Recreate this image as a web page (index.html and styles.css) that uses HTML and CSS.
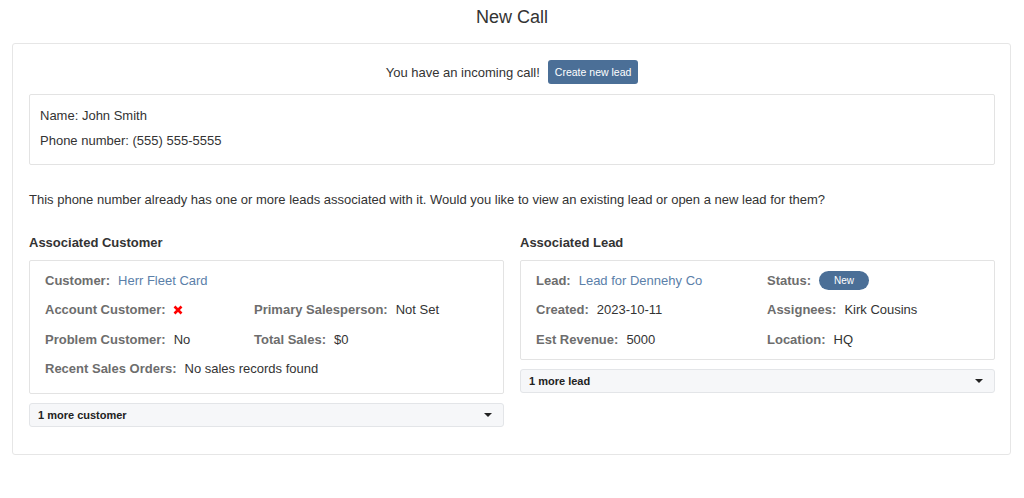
FILE: index.html
```html
<!DOCTYPE html>
<html lang="en">

<head>
    <meta charset="UTF-8">
    <meta name="viewport" content="width=device-width, initial-scale=1.0">
    <title>New Call</title>
    <link rel="stylesheet" href="styles.css">
</head>

<body>
    <h1 class="page-title">New Call</h1>
    <div class="call-card">
        <div class="incoming">
            <span>You have an incoming call!</span>
            <button class="btn-primary">Create new lead</button>
        </div>
        <div class="caller-box">
            <p>Name: John Smith</p>
            <p>Phone number: (555) 555-5555</p>
        </div>
        <p class="notice">This phone number already has one or more leads associated with it. Would you like to view an existing lead or open a new lead for them?</p>

        <div class="assoc">
            <div class="assoc-col">
                <h2 class="assoc-title">Associated Customer</h2>
                <div class="info-card info-card--customer">
                    <div class="field field--wide"><span class="label">Customer:</span><a class="link" href="#">Herr Fleet Card</a></div>
                    <div class="field"><span class="label">Account Customer:</span>
                        <svg class="icon-x" width="10" height="10" viewBox="0 0 10 10"><path d="M1.5 1.5 L8.5 8.5 M8.5 1.5 L1.5 8.5" stroke="#f00" stroke-width="2.6" /></svg>
                    </div>
                    <div class="field"><span class="label">Primary Salesperson:</span><span>Not Set</span></div>
                    <div class="field"><span class="label">Problem Customer:</span><span>No</span></div>
                    <div class="field"><span class="label">Total Sales:</span><span>$0</span></div>
                    <div class="field field--wide"><span class="label">Recent Sales Orders:</span><span>No sales records found</span></div>
                </div>
                <div class="more-select">1 more customer<span class="caret"></span></div>
            </div>
            <div class="assoc-col">
                <h2 class="assoc-title">Associated Lead</h2>
                <div class="info-card info-card--lead">
                    <div class="field"><span class="label">Lead:</span><a class="link" href="#">Lead for Dennehy Co</a></div>
                    <div class="field"><span class="label">Status:</span><span class="badge">New</span></div>
                    <div class="field"><span class="label">Created:</span><span>2023-10-11</span></div>
                    <div class="field"><span class="label">Assignees:</span><span>Kirk Cousins</span></div>
                    <div class="field"><span class="label">Est Revenue:</span><span>5000</span></div>
                    <div class="field"><span class="label">Location:</span><span>HQ</span></div>
                </div>
                <div class="more-select">1 more lead<span class="caret"></span></div>
            </div>
        </div>
    </div>
</body>

</html>
```

FILE: styles.css
```css
/* reset start */
* {
    padding: 0;
    margin: 0;
    box-sizing: border-box;
}

html,
body {
    width: 100%;
    height: 100%;
    overflow: hidden;
}

body {
    font-family: "Liberation Sans", Arial, sans-serif;
    color: #333;
    background: #fff;
}

a {
    text-decoration: none;
}

button {
    outline: none !important;
    font-family: inherit;
}

/* reset end */


/* structure start */
.page-title {
    font-size: 18px;
    font-weight: 400;
    text-align: center;
    line-height: 22px;
    padding-top: 6px;
    margin-bottom: 15px;
}

.call-card {
    margin: 0 13px 0 12px;
    border: 1px solid #e6e6e6;
    border-radius: 3px;
    padding: 16px 15px 27px 16px;
}

.incoming {
    display: flex;
    justify-content: center;
    align-items: center;
    gap: 8px;
    font-size: 13px;
}

.btn-primary {
    background: #4b6f97;
    color: #fff;
    border: none;
    border-radius: 3px;
    font-size: 10.5px;
    height: 24px;
    padding: 0 7px;
}

.caller-box {
    margin-top: 10px;
    border: 1px solid #e3e3e3;
    border-radius: 2px;
    padding: 8px 10px 11px;
    font-size: 13px;
}

.caller-box p {
    line-height: 25px;
}

.notice {
    font-size: 13px;
    line-height: 20px;
    margin-top: 25px;
}

.assoc {
    display: grid;
    grid-template-columns: 1fr 1fr;
    gap: 16px;
    margin-top: 25px;
}

.assoc-title {
    font-size: 13px;
    font-weight: 700;
    line-height: 16px;
    margin-bottom: 9px;
}

.info-card {
    display: grid;
    row-gap: 9.67px;
    border: 1px solid #e3e3e3;
    border-radius: 2px;
    padding: 9px 15px 10px;
    font-size: 13px;
}

.info-card--customer {
    grid-template-columns: 209px 1fr;
    padding-bottom: 14px;
}

.info-card--lead {
    grid-template-columns: 231px 1fr;
}

.field {
    display: flex;
    align-items: center;
    gap: 8px;
    height: 20px;
    white-space: nowrap;
}

.field--wide {
    grid-column: 1 / -1;
}

.label {
    color: #6d6d6d;
    font-weight: 700;
}

.link {
    color: #5b80a9;
}

.icon-x {
    margin-left: -1px;
}

.badge {
    display: inline-block;
    width: 50px;
    height: 19px;
    line-height: 19px;
    border-radius: 10px;
    background: #4b6f97;
    color: #fff;
    font-size: 10px;
    text-align: center;
}

.more-select {
    display: flex;
    justify-content: space-between;
    align-items: center;
    margin-top: 9px;
    height: 24px;
    padding: 0 8px;
    background: #f6f7f9;
    border: 1px solid #e3e5e8;
    border-radius: 3px;
    font-size: 11px;
    font-weight: 700;
    color: #222;
}

.caret {
    width: 0;
    height: 0;
    border-left: 4px solid transparent;
    border-right: 4px solid transparent;
    border-top: 4px solid #222;
    margin-right: 3px;
}

/* structure end */
```
